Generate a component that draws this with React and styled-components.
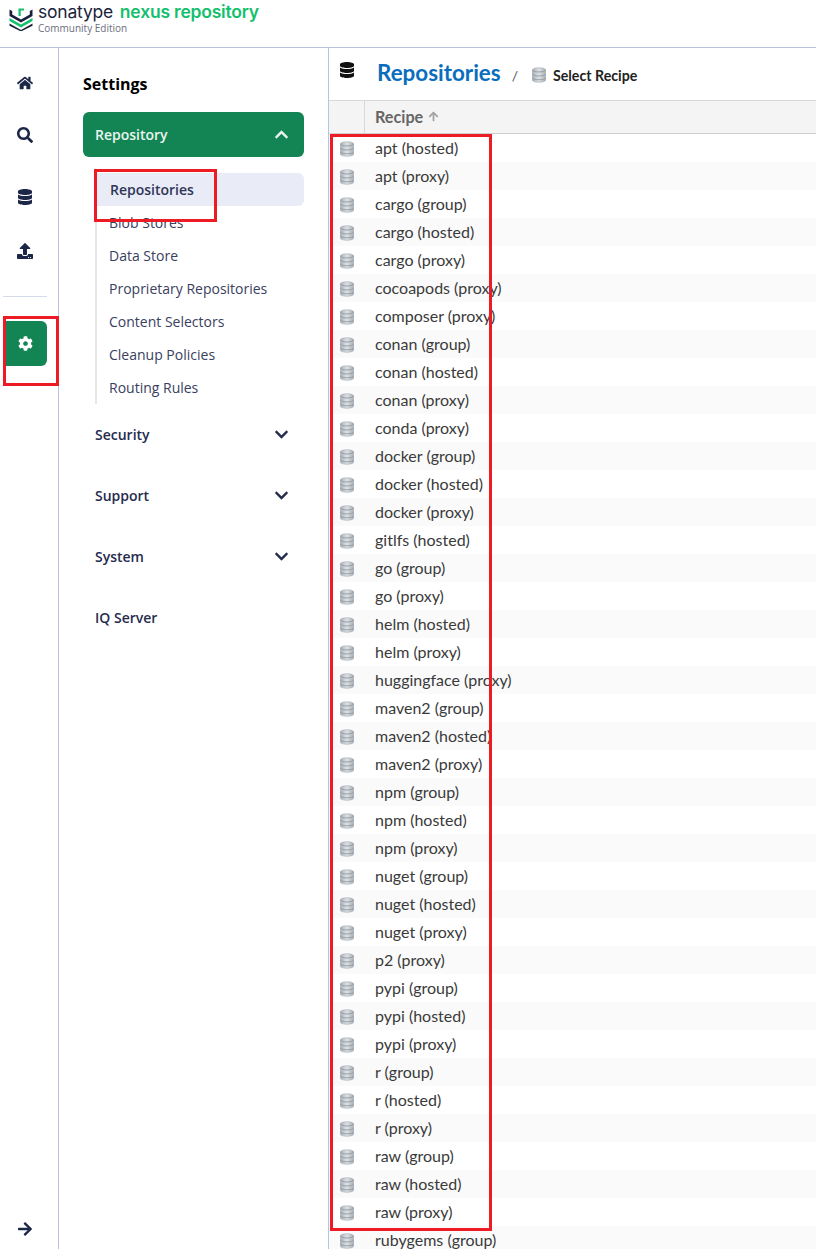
import styled, { createGlobalStyle } from "styled-components";
import { FaHome, FaSearch, FaDatabase, FaUpload, FaCog, FaArrowRight, FaChevronUp, FaChevronDown, FaArrowUp } from "react-icons/fa";

const Global = createGlobalStyle`
html, body { margin: 0; padding: 0; background: #fff; }
body { font-family: "Open Sans", sans-serif; overflow: hidden; }
`

const Page = styled.div`
position: relative;
width: 816px;
height: 1249px;
overflow: hidden;
display: flex;
flex-direction: column;
`
const Header = styled.header`
height: 47px;
flex: none;
box-sizing: content-box;
border-bottom: 1px solid #b9c2e0;
display: flex;
align-items: flex-start;
padding-left: 9px;
gap: 5px;
`
const LogoText = styled.div`
display: flex;
flex-direction: column;
`
const Brand = styled.div`
font-family: "Inter", sans-serif;
font-size: 17.5px;
line-height: 24px;
color: #1c1f3c;
letter-spacing: -0.2px;
white-space: nowrap;
span { color: #14c06d; font-weight: 600; margin-left: 2px; }
`
const Edition = styled.div`
font-size: 10px;
line-height: 11px;
color: #6b6d7d;
margin-top: -1px;
`
const Body = styled.div`
flex: 1;
display: flex;
min-height: 0;
`
const Rail = styled.nav`
width: 58px;
flex: none;
box-sizing: content-box;
border-right: 1px solid #b9c2e0;
display: flex;
flex-direction: column;
align-items: center;
padding-top: 26px;
color: #1c2748;
`
const RailIcon = styled.div`
height: 18px;
width: 50px;
margin-right: 8px;
display: flex;
align-items: center;
justify-content: center;
font-size: 16px;
margin-bottom: ${(p) => p.$gap}px;
`
const RailRule = styled.div`
width: 44px;
height: 1px;
background: #d5daec;
margin-left: 3px;
margin-bottom: 24px;
align-self: flex-start;
`
const RailActive = styled.div`
width: 38px;
height: 45px;
margin-left: 6px;
padding-right: 3px;
align-self: flex-start;
background: #138454;
border-radius: 0 6px 6px 0;
color: #fff;
display: flex;
align-items: center;
justify-content: center;
font-size: 15px;
`
const RailBottom = styled.div`
margin-top: auto;
margin-bottom: 11px;
margin-right: 8px;
font-size: 16px;
height: 18px;
display: flex;
align-items: center;
`
const Side = styled.aside`
width: 270px;
flex: none;
border-right: 1px solid #b9c2e0;
padding: 25px 24px 0 24px;
box-sizing: border-box;
`
const SideTitle = styled.h2`
margin: 0 0 17px;
font-size: 16px;
line-height: 22px;
font-weight: 700;
color: #000;
`
const Accordion = styled.div`
height: 45px;
box-sizing: border-box;
padding: 0 15px 0 12px;
border-radius: 6px;
display: flex;
align-items: center;
justify-content: space-between;
font-size: 14px;
font-weight: 600;
background: ${(p) => (p.$open ? "#138454" : "transparent")};
color: ${(p) => (p.$open ? "#e8f5ef" : "#262c4e")};
margin-bottom: ${(p) => p.$gap}px;
`
const SubList = styled.ul`
list-style: none;
margin: 16px 0 8px 12px;
padding: 0;
border-left: 2px solid #e6e6e6;
`
const SubItem = styled.li`
height: 33px;
display: flex;
align-items: center;
font-size: 14px;
color: #3a4060;
padding-left: ${(p) => (p.$active ? "13px" : "12px")};
${(p) => p.$active && `
  background: #e9ecf6;
  border-radius: 0 6px 6px 0;
  font-weight: 600;
  color: #2f3557;
`}
`
const Main = styled.main`
flex: 1;
min-width: 0;
display: flex;
flex-direction: column;
`
const Crumbs = styled.div`
height: 52px;
flex: none;
display: flex;
align-items: center;
box-sizing: border-box;
padding: 0 0 2px 10px;
`
const CrumbIcon = styled.div`
font-size: 16px;
color: #111;
width: 38px;
margin-top: -6px;
display: flex;
`
const CrumbPath = styled.div`
display: flex;
align-items: baseline;
font-family: "Lato", sans-serif;
margin-top: -2px;
svg { transform: translateY(2px); }
`
const CrumbTitle = styled.h1`
margin: 0;
font-size: 22.4px;
font-weight: 700;
color: #0a6ebd;
`
const CrumbSep = styled.span`
font-size: 14px;
color: #555;
margin: 0 14px 0 11px;
`
const CrumbLeaf = styled.span`
font-size: 14.2px;
font-weight: 700;
color: #222;
margin-left: 7px;
`
const TableHead = styled.div`
height: 32px;
flex: none;
display: flex;
background: #f4f4f4;
border-top: 1px solid #d8d8d8;
border-bottom: 1px solid #cfcfcf;
box-sizing: content-box;
`
const HeadIconCell = styled.div`
width: 35px;
box-sizing: content-box;
border-right: 1px solid #d8d8d8;
`
const HeadCell = styled.div`
padding: 0 0 2px 10px;
display: flex;
align-items: center;
gap: 5px;
font-family: "Lato", sans-serif;
font-size: 16.2px;
font-weight: 700;
color: #666;
`
const Row = styled.div`
height: 28px;
flex: none;
box-sizing: border-box;
padding-bottom: 2px;
display: flex;
align-items: center;
background: ${(p) => (p.$odd ? "#fafafa" : "#fff")};
font-family: "Lato", sans-serif;
font-size: 16px;
color: #3a3a3a;
`
const RowIcon = styled.div`
width: 46px;
padding-left: 11px;
margin-top: 4px;
box-sizing: border-box;
display: flex;
`
const Mark = styled.div`
position: absolute;
left: ${(p) => p.$x}px;
top: ${(p) => p.$y}px;
width: ${(p) => p.$w}px;
height: ${(p) => p.$h}px;
box-sizing: border-box;
border: 3px solid #ed1c24;
pointer-events: none;
`

const Logo = () => (
  <svg width="24" height="24" viewBox="0 0 24 24" style={{ marginTop: 7, flex: "none" }}>
    <path d="M0.500 2.500v6.500l11.500 6.500 11.500-6.500V2.500l-2.700 1.500v3.500L12 12.500 3.200 7.500V4z" fill="#1c1f3c" />
    <path d="M0.500 11l11.500 6.500 11.500-6.500v3L12 20.500 0.500 14z" fill="#14c06d" />
    <path d="M0.500 16.500L12 23l11.500-6.500v2.200L12 24.500 0.500 18.700z" fill="#1c1f3c" />
    <path d="M9.500 9V1.500h5.500v2h-3.300V9z" fill="#14c06d" />
  </svg>
);

const DbIcon = () => (
  <svg width="14" height="16" viewBox="0 0 14 16">
    <defs>
      <linearGradient id="dbg" x1="0" x2="1" y1="0" y2="0">
        <stop offset="0" stopColor="#a8afb7" />
        <stop offset="0.5" stopColor="#dfe2e6" />
        <stop offset="1" stopColor="#a6adb5" />
      </linearGradient>
    </defs>
    <path d="M0.300 3C0.300 0 13.700 0 13.700 3v10c0 3-13.400 3-13.400 0z" fill="url(#dbg)" stroke="#a5abb2" strokeWidth="0.6" />
    <path d="M0.300 3.200c1 2.300 12.400 2.300 13.400 0M0.300 7.200c1 2.300 12.400 2.300 13.400 0M0.300 11c1 2.300 12.400 2.300 13.400 0" fill="none" stroke="#8c949c" strokeWidth="0.8" />
  </svg>
);

const settings = ["Blob Stores", "Data Store", "Proprietary Repositories", "Content Selectors", "Cleanup Policies", "Routing Rules"];

const kinds = [
  "apt (hosted)", "apt (proxy)", "cargo (group)", "cargo (hosted)", "cargo (proxy)", "cocoapods (proxy)",
  "composer (proxy)", "conan (group)", "conan (hosted)", "conan (proxy)", "conda (proxy)", "docker (group)",
  "docker (hosted)", "docker (proxy)", "gitlfs (hosted)", "go (group)", "go (proxy)", "helm (hosted)",
  "helm (proxy)", "huggingface (proxy)", "maven2 (group)", "maven2 (hosted)", "maven2 (proxy)", "npm (group)",
  "npm (hosted)", "npm (proxy)", "nuget (group)", "nuget (hosted)", "nuget (proxy)", "p2 (proxy)",
  "pypi (group)", "pypi (hosted)", "pypi (proxy)", "r (group)", "r (hosted)", "r (proxy)",
  "raw (group)", "raw (hosted)", "raw (proxy)", "rubygems (group)",
];

export default function App() {
  return (
    <Page>
      <Global />
      <Header>
        <Logo />
        <LogoText>
          <Brand>sonatype <span>nexus repository</span></Brand>
          <Edition>Community Edition</Edition>
        </LogoText>
      </Header>
      <Body>
        <Rail>
          <RailIcon $gap={34}><FaHome /></RailIcon>
          <RailIcon $gap={44}><FaSearch /></RailIcon>
          <RailIcon $gap={36}><FaDatabase /></RailIcon>
          <RailIcon $gap={36}><FaUpload /></RailIcon>
          <RailRule />
          <RailActive><FaCog /></RailActive>
          <RailBottom><FaArrowRight /></RailBottom>
        </Rail>
        <Side>
          <SideTitle>Settings</SideTitle>
          <Accordion $open $gap={0}>Repository <FaChevronUp size={15} /></Accordion>
          <SubList>
            <SubItem $active>Repositories</SubItem>
            {settings.map((s) => <SubItem key={s}>{s}</SubItem>)}
          </SubList>
          <Accordion $gap={16}>Security <FaChevronDown size={15} /></Accordion>
          <Accordion $gap={16}>Support <FaChevronDown size={15} /></Accordion>
          <Accordion $gap={16}>System <FaChevronDown size={15} /></Accordion>
          <Accordion $gap={0}>IQ Server</Accordion>
        </Side>
        <Main>
          <Crumbs>
            <CrumbIcon><FaDatabase /></CrumbIcon>
            <CrumbPath>
              <CrumbTitle>Repositories</CrumbTitle>
              <CrumbSep>/</CrumbSep>
              <DbIcon />
              <CrumbLeaf>Select Recipe</CrumbLeaf>
            </CrumbPath>
          </Crumbs>
          <TableHead>
            <HeadIconCell />
            <HeadCell>Recipe <FaArrowUp size={11} color="#a0a0a0" /></HeadCell>
          </TableHead>
          {kinds.map((k, i) => (
            <Row key={k} $odd={i % 2 === 1}>
              <RowIcon><DbIcon /></RowIcon>
              {k}
            </Row>
          ))}
        </Main>
      </Body>
      <Mark $x={94} $y={169} $w={123} $h={53} />
      <Mark $x={3} $y={316} $w={56} $h={70} />
      <Mark $x={330} $y={134} $w={162} $h={1097} />
    </Page>
  );
}
